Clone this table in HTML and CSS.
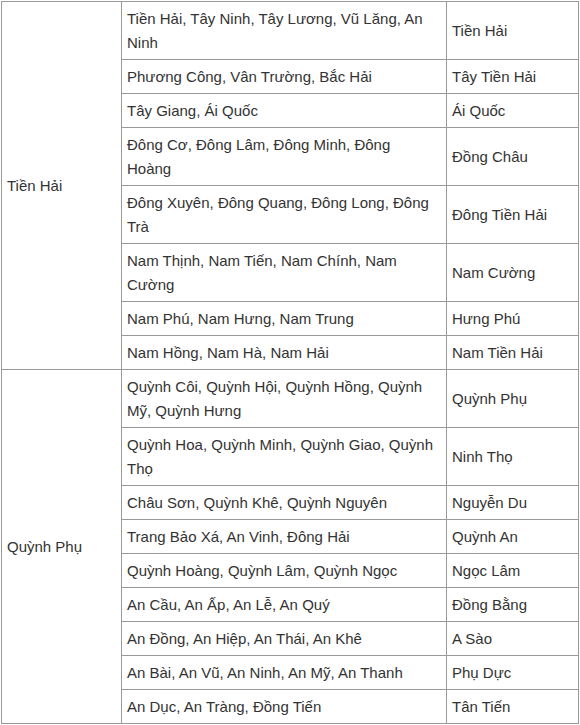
FILE: index.html
```html
<!DOCTYPE html>
<html lang="vi">
<head>
<meta charset="utf-8">
<link rel="stylesheet" href="styles.css">
</head>
<body>
<table class="tbl">
<colgroup><col class="c1"><col class="c2"><col class="c3"></colgroup>
<tbody>
<tr><td rowspan="8">Tiền Hải</td><td class="mid">Tiền Hải, Tây Ninh, Tây Lương, Vũ Lăng, An Ninh</td><td>Tiền Hải</td></tr>
<tr><td class="mid">Phương Công, Vân Trường, Bắc Hải</td><td>Tây Tiền Hải</td></tr>
<tr><td class="mid">Tây Giang, Ái Quốc</td><td>Ái Quốc</td></tr>
<tr><td class="mid">Đông Cơ, Đông Lâm, Đông Minh, Đông Hoàng</td><td>Đồng Châu</td></tr>
<tr><td class="mid">Đông Xuyên, Đông Quang, Đông Long, Đông Trà</td><td>Đông Tiền Hải</td></tr>
<tr><td class="mid">Nam Thịnh, Nam Tiến, Nam Chính, Nam Cường</td><td>Nam Cường</td></tr>
<tr><td class="mid">Nam Phú, Nam Hưng, Nam Trung</td><td>Hưng Phú</td></tr>
<tr><td class="mid">Nam Hồng, Nam Hà, Nam Hải</td><td>Nam Tiền Hải</td></tr>
<tr><td rowspan="10">Quỳnh Phụ</td><td class="mid">Quỳnh Côi, Quỳnh Hội, Quỳnh Hồng, Quỳnh Mỹ, Quỳnh Hưng</td><td>Quỳnh Phụ</td></tr>
<tr><td class="mid">Quỳnh Hoa, Quỳnh Minh, Quỳnh Giao, Quỳnh Thọ</td><td>Ninh Thọ</td></tr>
<tr><td class="mid">Châu Sơn, Quỳnh Khê, Quỳnh Nguyên</td><td>Nguyễn Du</td></tr>
<tr><td class="mid">Trang Bảo Xá, An Vinh, Đông Hải</td><td>Quỳnh An</td></tr>
<tr><td class="mid">Quỳnh Hoàng, Quỳnh Lâm, Quỳnh Ngọc</td><td>Ngọc Lâm</td></tr>
<tr><td class="mid">An Cầu, An Ấp, An Lễ, An Quý</td><td>Đồng Bằng</td></tr>
<tr><td class="mid">An Đồng, An Hiệp, An Thái, An Khê</td><td>A Sào</td></tr>
<tr><td class="mid">An Bài, An Vũ, An Ninh, An Mỹ, An Thanh</td><td>Phụ Dực</td></tr>
<tr><td class="mid">An Dục, An Tràng, Đồng Tiến</td><td>Tân Tiến</td></tr>
</tbody>
</table>
</body>
</html>
```
FILE: styles.css
```css
html, body {
  margin: 0;
  background: #fff;
}
body {
  padding: 1px 0 0 1px;
  font-family: "Liberation Sans", Arial, sans-serif;
  font-size: 15px;
  color: #333;
}
.tbl {
  border-collapse: collapse;
  table-layout: fixed;
  width: 577px;
}
.c1 { width: 120px; }
.c2 { width: 325px; }
.c3 { width: 132px; }
.tbl td {
  border: 1px solid #999;
  padding: 5px 5px 4px 5px;
  line-height: 24px;
  vertical-align: middle;
  text-align: left;
}
.tbl td.mid {
  padding-right: 10px;
}
```
